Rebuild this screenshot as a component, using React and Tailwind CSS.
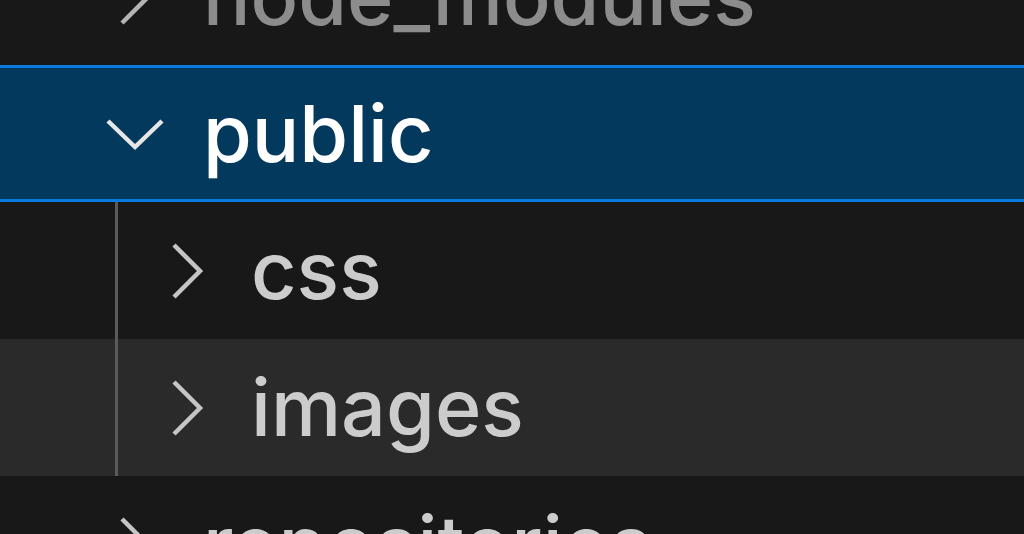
import React from 'react';

const rows = [
  { name: 'node_modules', depth: 0, open: false, tone: 'ignored' },
  { name: 'public', depth: 0, open: true, tone: 'selected' },
  { name: 'css', depth: 1, open: false, tone: 'normal' },
  { name: 'images', depth: 1, open: false, tone: 'hover' },
  { name: 'repositories', depth: 0, open: false, tone: 'normal' },
];

function Chevron({ open, color }) {
  return (
    <svg width="70" height="70" viewBox="0 0 70 70" fill="none" className="shrink-0">
      {open ? (
        <polyline points="8,22 35,48 62,22" stroke={color} strokeWidth="4.5" strokeLinejoin="miter" />
      ) : (
        <polyline points="22,9 48,35 22,61" stroke={color} strokeWidth="4.5" strokeLinejoin="miter" />
      )}
    </svg>
  );
}

function Row({ row }) {
  const rowClass =
    row.tone === 'selected'
      ? 'bg-[#04395e] border-y-[3px] border-[#0a7ce0]'
      : row.tone === 'hover'
      ? 'bg-[#2a2a2b]'
      : '';

  const textClass =
    row.tone === 'selected'
      ? 'text-white'
      : row.tone === 'ignored'
      ? 'text-[#8c8c8c]'
      : 'text-[#cccccc]';

  const chevronColor =
    row.tone === 'selected' ? '#e6e6e6' : row.tone === 'ignored' ? '#b4b4b4' : '#c5c5c5';

  return (
    <div className={`flex h-[137px] items-stretch ${rowClass}`}>
      {row.depth === 1 ? (
        <div className="w-[118px] shrink-0 border-r-[3px] border-[#5a5a5a]" />
      ) : null}
      <div
        className={`flex items-center ${row.depth === 1 ? 'pl-[34px]' : 'pl-[100px]'}`}
      >
        <Chevron open={row.open} color={chevronColor} />
        <span
          className={`whitespace-nowrap text-[79px] font-medium ${textClass} ${
            row.depth === 1 ? 'ml-[29px]' : 'ml-[33px]'
          }`}
        >
          {row.name}
        </span>
      </div>
    </div>
  );
}

export default function App() {
  return (
    <div
      className="h-[534px] w-[1024px] overflow-hidden bg-[#181818]"
      style={{ fontFamily: 'Inter, "Liberation Sans", sans-serif' }}
    >
      <div className="-mt-[72px]">
        {rows.map((row) => (
          <Row key={row.name} row={row} />
        ))}
      </div>
    </div>
  );
}
